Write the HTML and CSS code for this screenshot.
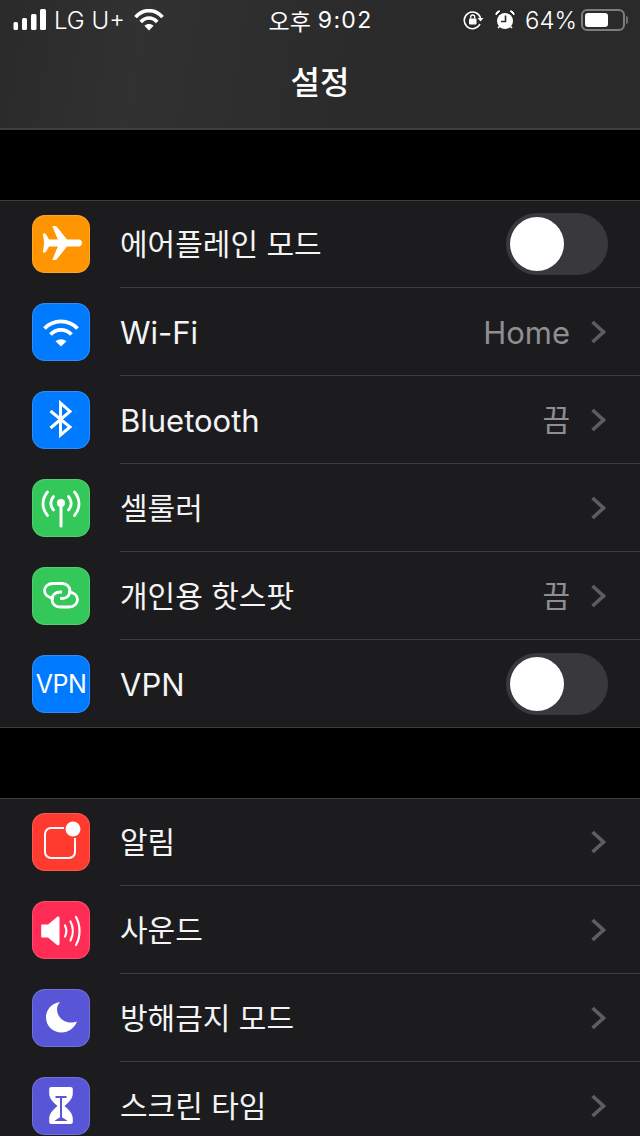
FILE: index.html
```html
<!DOCTYPE html>
<html lang="ko">
<head>
    <meta charset="UTF-8">
    <meta name="viewport" content="width=device-width, initial-scale=1.0">
    <title>설정</title>
    <link rel="stylesheet" href="styles.css">
</head>
<body>
    <header class="topbar">
        <div class="status">
            <div class="status-left">
                <svg class="signal" width="34" height="22" viewBox="0 0 34 22" fill="#fff">
                    <rect x="0.5" y="13" width="4.500" height="8" rx="1.500"/>
                    <rect x="9" y="9" width="5" height="12" rx="1.500"/>
                    <rect x="18" y="5" width="5.500" height="16" rx="1.500"/>
                    <rect x="27" y="0" width="6" height="21" rx="1.500"/>
                </svg>
                <span class="carrier">LG U+</span>
                <svg class="status-wifi" width="30" height="22" viewBox="0 0 30 22" fill="none" stroke="#fff" stroke-width="3.600">
                    <path d="M1.500 8.200C9-.6 21-.6 28.500 8.200"/>
                    <path d="M6.800 13C11.500 7.700 18.500 7.700 23.200 13"/>
                    <path d="M15 21.500l-4.600-4.800c2.700-2.200 6.500-2.200 9.200 0z" fill="#fff" stroke="none"/>
                </svg>
            </div>
            <div class="clock"><span class="clock-ko">오후</span> <span class="clock-time">9:02</span></div>
            <div class="status-right">
                <svg width="21" height="20" viewBox="0 0 21 20" fill="none" stroke="#fff" stroke-width="1.600">
                    <path d="M17.500 8A8.300 8.300 0 1 0 17 14"/>
                    <path d="M14.500 8h6l-3 3.500z" fill="#fff" stroke="none"/>
                    <rect x="6" y="8.500" width="7.500" height="6" rx="1" fill="#fff" stroke="none"/>
                    <path d="M7.700 8.500V7a2 2 0 0 1 4 0v1.500" stroke-width="1.300"/>
                </svg>
                <svg class="alarm" width="20" height="20" viewBox="0 0 20 20">
                    <circle cx="10" cy="11" r="8" fill="#fff"/>
                    <path d="M1 5l4-4h-2l-2 2zM19 5l-4-4h2l2 2z" fill="#fff" stroke="#fff" stroke-width="1"/>
                    <path d="M3 18l2-2M17 18l-2-2" stroke="#fff" stroke-width="1.600"/>
                    <path d="M10.500 5.500v6H6" fill="none" stroke="#2b2b2d" stroke-width="1.600"/>
                </svg>
                <span class="battery-pct">64%</span>
                <div class="battery"><div class="battery-fill"></div></div>
                <div class="battery-nub"></div>
            </div>
        </div>
        <h1 class="title">설정</h1>
    </header>

    <section class="group">
        <div class="row">
            <div class="icon orange">
                <svg width="58" height="58" viewBox="0 0 58 58" fill="#fff">
                    <path d="M46.500 24.500H35L24.800 11.700c-.4-.5-.9-.7-1.500-.7h-3l5.500 13.500H17L13.800 19c-.2-.3-.5-.4-.8-.4h-2.200L12.200 28l-1.400 9.400H13c.3 0 .6-.1.8-.4L17 31.500h8.800L20.300 45h3c.6 0 1.100-.2 1.500-.7L35 31.500h11.500c2.300 0 3.500-1.600 3.500-3.500s-1.200-3.500-3.500-3.500z"/>
                </svg>
            </div>
            <div class="row-body">
                <span class="label ko">에어플레인 모드</span>
                <div class="toggle"><div class="knob"></div></div>
            </div>
        </div>
        <div class="row">
            <div class="icon blue">
                <svg width="58" height="58" viewBox="0 0 58 58" fill="none" stroke="#fff" stroke-width="3.800">
                    <path d="M12.500 25.500C21.500 16 36.500 16 45.500 25.500"/>
                    <path d="M18.500 31.500C24.500 25.300 33.500 25.300 39.500 31.500"/>
                    <path d="M29 43.500l-5.500-5.200c3.200-2.800 7.800-2.800 11 0z" fill="#fff" stroke="none"/>
                </svg>
            </div>
            <div class="row-body">
                <span class="label">Wi-Fi</span>
                <span class="value">Home</span>
                <svg class="chevron" width="16" height="24" viewBox="0 0 16 24"><path d="M2.500 2l11 10-11 10"/></svg>
            </div>
        </div>
        <div class="row">
            <div class="icon blue">
                <svg width="58" height="58" viewBox="0 0 58 58" fill="none" stroke="#fff" stroke-width="3">
                    <path d="M18.500 20L38 36 28.500 44V12L38 20.500 18.500 37"/>
                </svg>
            </div>
            <div class="row-body">
                <span class="label">Bluetooth</span>
                <span class="value ko">끔</span>
                <svg class="chevron" width="16" height="24" viewBox="0 0 16 24"><path d="M2.500 2l11 10-11 10"/></svg>
            </div>
        </div>
        <div class="row">
            <div class="icon green">
                <svg width="58" height="58" viewBox="0 0 58 58" fill="none" stroke="#fff" stroke-width="2.800" stroke-linecap="round">
                    <circle cx="29" cy="24" r="4" fill="#fff" stroke="none"/>
                    <path d="M29 25v22" stroke-width="3"/>
                    <path d="M21.500 17.500c-3.500 4.200-3.500 9 0 13.500M36.500 17.500c3.500 4.200 3.500 9 0 13.500"/>
                    <path d="M15.500 13c-6 7-6 16.500 0 23.500M42.500 13c6 7 6 16.500 0 23.500"/>
                </svg>
            </div>
            <div class="row-body">
                <span class="label ko">셀룰러</span>
                <svg class="chevron" width="16" height="24" viewBox="0 0 16 24"><path d="M2.500 2l11 10-11 10"/></svg>
            </div>
        </div>
        <div class="row">
            <div class="icon green">
                <svg width="58" height="58" viewBox="0 0 58 58" fill="none" stroke="#fff" stroke-width="2.800">
                    <path d="M22 31c-6 0-9.500-3.500-9.500-7.500s3.500-7 8.500-7h9c5 0 8 3.500 8 7.500 0 4.500-3.500 7.500-8 7.500h-2"/>
                    <path d="M36 25c6 0 9.500 3.500 9.500 7.500s-3.500 7.500-8.500 7.500h-9c-5 0-8-3.500-8-7.500 0-4.500 3.500-7.500 8-7.500h2"/>
                </svg>
            </div>
            <div class="row-body">
                <span class="label ko">개인용 핫스팟</span>
                <span class="value ko">끔</span>
                <svg class="chevron" width="16" height="24" viewBox="0 0 16 24"><path d="M2.500 2l11 10-11 10"/></svg>
            </div>
        </div>
        <div class="row">
            <div class="icon blue vpn">VPN</div>
            <div class="row-body">
                <span class="label">VPN</span>
                <div class="toggle"><div class="knob"></div></div>
            </div>
        </div>
    </section>

    <section class="group">
        <div class="row">
            <div class="icon red">
                <svg width="58" height="58" viewBox="0 0 58 58" fill="none" stroke="#fff" stroke-width="2">
                    <path d="M32 15H19a6 6 0 0 0-6 6v18a6 6 0 0 0 6 6h18a6 6 0 0 0 6-6V25"/>
                    <circle cx="41" cy="16" r="7.500" fill="#fff" stroke="none"/>
                </svg>
            </div>
            <div class="row-body">
                <span class="label ko">알림</span>
                <svg class="chevron" width="16" height="24" viewBox="0 0 16 24"><path d="M2.500 2l11 10-11 10"/></svg>
            </div>
        </div>
        <div class="row">
            <div class="icon pink">
                <svg width="58" height="58" viewBox="0 0 58 58" fill="none" stroke="#fff" stroke-width="2.200" stroke-linecap="round">
                    <path d="M10 23.500h6L25 16c1-.8 2.500-.3 2.500 1.200v25.600c0 1.500-1.500 2-2.500 1.200l-9-7.500h-6a1 1 0 0 1-.8-1v-11a1 1 0 0 1 .8-1z" fill="#fff" stroke="none"/>
                    <path d="M33 24.500c1.700 3.500 1.700 7.500 0 11"/>
                    <path d="M38.500 20.500c3 5.700 3 13.300 0 19"/>
                    <path d="M44 16c4.700 8.500 4.700 19.500 0 28"/>
                </svg>
            </div>
            <div class="row-body">
                <span class="label ko">사운드</span>
                <svg class="chevron" width="16" height="24" viewBox="0 0 16 24"><path d="M2.500 2l11 10-11 10"/></svg>
            </div>
        </div>
        <div class="row">
            <div class="icon indigo">
                <svg width="58" height="58" viewBox="0 0 58 58" fill="#fff">
                    <path d="M28 13C19 14.500 14 21 14 28.500 14 37 21 43.500 29.500 43.500 36.500 43.500 42.500 39 45 32.500 43 33.300 41 33.500 39 33.500 31 33.500 25 27.500 25 20 25 17.500 26 15.200 28 13z"/>
                </svg>
            </div>
            <div class="row-body">
                <span class="label ko">방해금지 모드</span>
                <svg class="chevron" width="16" height="24" viewBox="0 0 16 24"><path d="M2.500 2l11 10-11 10"/></svg>
            </div>
        </div>
        <div class="row">
            <div class="icon indigo">
                <svg width="58" height="58" viewBox="0 0 58 58">
                    <path d="M19.500 10h19c1.500 0 2.300.8 2.300 2.200v4c0 5-3.500 8.800-8.300 12.800 4.800 4 8.300 7.800 8.300 12.800v3c0 1.500-.8 2.200-2.300 2.200h-19c-1.500 0-2.300-.7-2.300-2.200v-3c0-5 3.500-8.800 8.300-12.800-4.800-4-8.300-7.800-8.300-12.800v-4c0-1.400.8-2.200 2.300-2.200z" fill="#fff"/>
                    <path d="M23.500 20h11M29 20v20" fill="none" stroke="#5856d6" stroke-width="2"/>
                    <path d="M22.500 44c3-2.300 4.500-3.300 6.500-4.300 2 1 3.500 2 6.500 4.300z" fill="#5856d6"/>
                </svg>
            </div>
            <div class="row-body">
                <span class="label ko">스크린 타임</span>
                <svg class="chevron" width="16" height="24" viewBox="0 0 16 24"><path d="M2.500 2l11 10-11 10"/></svg>
            </div>
        </div>
    </section>
</body>
</html>
```

FILE: styles.css
```css
html, body {
    margin: 0;
    height: 1136px;
    overflow: hidden;
    background: #000;
}
body {
    font-family: Inter, "Noto Sans CJK KR", sans-serif;
    color: #fff;
}
.topbar {
    height: 128px;
    background: linear-gradient(100deg, #2a2a2b, #313132 22%, #2a2a2b 60%);
    border-bottom: 2px solid #3f3f41;
}
.status {
    height: 40px;
    display: flex;
    align-items: center;
    justify-content: space-between;
    padding: 0 12px 0 13px;
    font-size: 24px;
}
.status-left, .status-right {
    display: flex;
    align-items: center;
    width: 220px;
}
.status-right {
    justify-content: flex-end;
}
.carrier {
    margin-left: 7px;
    margin-right: 9px;
    font-weight: 300;
}
.clock {
    display: flex;
    align-items: center;
    gap: 7px;
}
.clock-ko {
    font-size: 23px;
}
.clock-time {
    font-size: 23px;
    font-weight: 400;
    letter-spacing: 1.3px;
}
.alarm {
    margin-left: 11px;
}
.battery-pct {
    margin-left: 10px;
    margin-right: 4px;
    font-weight: 300;
}
.battery {
    width: 44px;
    height: 22px;
    box-sizing: border-box;
    border: 2px solid #7d7d7f;
    border-radius: 6px;
    padding: 2px;
}
.battery-fill {
    width: 23px;
    height: 100%;
    background: #fff;
    border-radius: 3px;
}
.battery-nub {
    width: 2px;
    height: 8px;
    margin-left: 1px;
    background: #6f6f71;
    border-radius: 0 2px 2px 0;
}
.title {
    margin: 0;
    height: 86px;
    line-height: 86px;
    text-align: center;
    font-size: 32px;
    font-weight: 500;
}
.group {
    margin-top: 70px;
    background: #1c1c1e;
    border-top: 1px solid #3d3d40;
    border-bottom: 1px solid #3d3d40;
}
.row {
    height: 88px;
    display: flex;
    padding-left: 32px;
}
.row:first-child {
    height: 86px;
}
.icon {
    flex: none;
    align-self: center;
    width: 58px;
    height: 58px;
    border-radius: 13px;
    box-shadow: inset 0 0 0 1px rgba(255, 255, 255, 0.16);
}
.row + .row .icon {
    margin-top: 2px;
}
.icon svg {
    display: block;
}
.orange { background: #ff9500; }
.blue { background: #007aff; }
.green { background: #34c759; }
.red { background: #ff3b30; }
.pink { background: #ff2d55; }
.indigo { background: #5856d6; }
.vpn {
    text-align: center;
    line-height: 58px;
    font-size: 25px;
    letter-spacing: -0.5px;
}
.row-body {
    flex: 1;
    margin-left: 30px;
    padding-right: 32px;
    display: flex;
    align-items: center;
    border-top: 1px solid #3d3d40;
    box-sizing: border-box;
}
.row:first-child .row-body {
    border-top: none;
}
.label {
    flex: 1;
    font-size: 31px;
    padding-top: 2px;
    color: #f4f4f5;
}
.value {
    font-size: 31px;
    padding-top: 2px;
    color: #8e8e93;
    margin-right: 20px;
}
.ko {
    font-size: 30px;
    padding-top: 0;
    padding-bottom: 4px;
}
.chevron {
    fill: none;
    stroke: #5e5e62;
    stroke-width: 3.600;
    margin-right: 2px;
}
.toggle {
    width: 102px;
    height: 62px;
    box-sizing: border-box;
    padding: 4px;
    border-radius: 31px;
    background: #39393d;
}
.knob {
    width: 54px;
    height: 54px;
    border-radius: 50%;
    background: #fff;
}
```
